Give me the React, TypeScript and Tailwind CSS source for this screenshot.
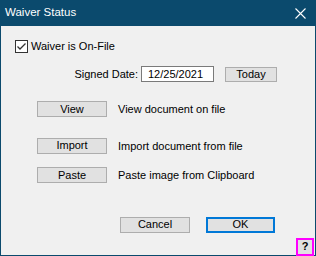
const font = { fontFamily: '"Liberation Sans", Arial, sans-serif' };

function Btn({ label, className = "" }: { label: string; className?: string }) {
  return (
    <div
      className={`flex items-center justify-center border border-[#adadad] bg-[#e1e1e1] text-[11px] leading-none text-black ${className}`}
    >
      {label}
    </div>
  );
}

function ActionRow({ label, note, className = "" }: { label: string; note: string; className?: string }) {
  return (
    <div className={`flex items-center ${className}`}>
      <Btn label={label} className="ml-[22px] h-[16px] w-[70px]" />
      <span className="ml-[11px] text-[11px] text-black">{note}</span>
    </div>
  );
}

export default function App() {
  return (
    <div
      className="flex h-[256px] w-[316px] flex-col border-x border-b border-[#0b4a6d] bg-[#f0f0f0]"
      style={font}
    >
      {/* title bar */}
      <div className="flex h-[26px] shrink-0 items-center justify-between bg-[#0b4a6d] pl-[4px] pr-[9px]">
        <span className="text-[11.5px] text-white">Waiver Status</span>
        <svg width="11" height="11" viewBox="0 0 11 11" className="text-white">
          <path d="M0.5 0.5 L10.5 10.5 M10.5 0.5 L0.5 10.5" stroke="currentColor" strokeWidth="1.1" />
        </svg>
      </div>

      <div className="flex flex-1 flex-col pl-[14px]">
        {/* checkbox */}
        <div className="mt-[14px] flex h-[13px] items-center">
          <div className="flex h-[13px] w-[13px] items-center justify-center border border-[#333333] bg-white">
            <svg width="11" height="11" viewBox="0 0 11 11">
              <path d="M1.5 5.5 L4 8 L9.5 2.5" fill="none" stroke="#333333" strokeWidth="1.3" />
            </svg>
          </div>
          <span className="ml-[3px] text-[11px] text-black">Waiver is On-File</span>
        </div>

        {/* signed date */}
        <div className="mt-[13px] flex h-[16px] items-center">
          <span className="w-[123px] text-right text-[11px] text-black">Signed Date:</span>
          <div className="ml-[3px] flex h-[16px] w-[73px] items-center border border-[#7a7a7a] bg-white pl-[6px] text-[11px] text-black">
            12/25/2021
          </div>
          <Btn label="Today" className="ml-[11px] h-[15px] w-[52px]" />
        </div>

        <ActionRow label="View" note="View document on file" className="mt-[19px]" />
        <ActionRow label="Import" note="Import document from file" className="mt-[20px]" />
        <ActionRow label="Paste" note="Paste image from Clipboard" className="mt-[13px]" />

        {/* dialog buttons */}
        <div className="mt-[33px] flex items-center">
          <Btn label="Cancel" className="ml-[105px] h-[16px] w-[70px]" />
          <div className="ml-[16px] flex h-[16px] w-[69px] items-center justify-center border-2 border-[#0078d7] bg-[#e1e1e1] text-[11px] leading-none text-black">
            OK
          </div>
        </div>

        <div className="mr-[1px] mt-[5px] flex h-[18px] w-[18px] items-center justify-center self-end border-2 border-[#ff00ff] bg-[#e1e1e1] text-[11px] font-bold leading-none text-black">
          ?
        </div>
      </div>
    </div>
  );
}
